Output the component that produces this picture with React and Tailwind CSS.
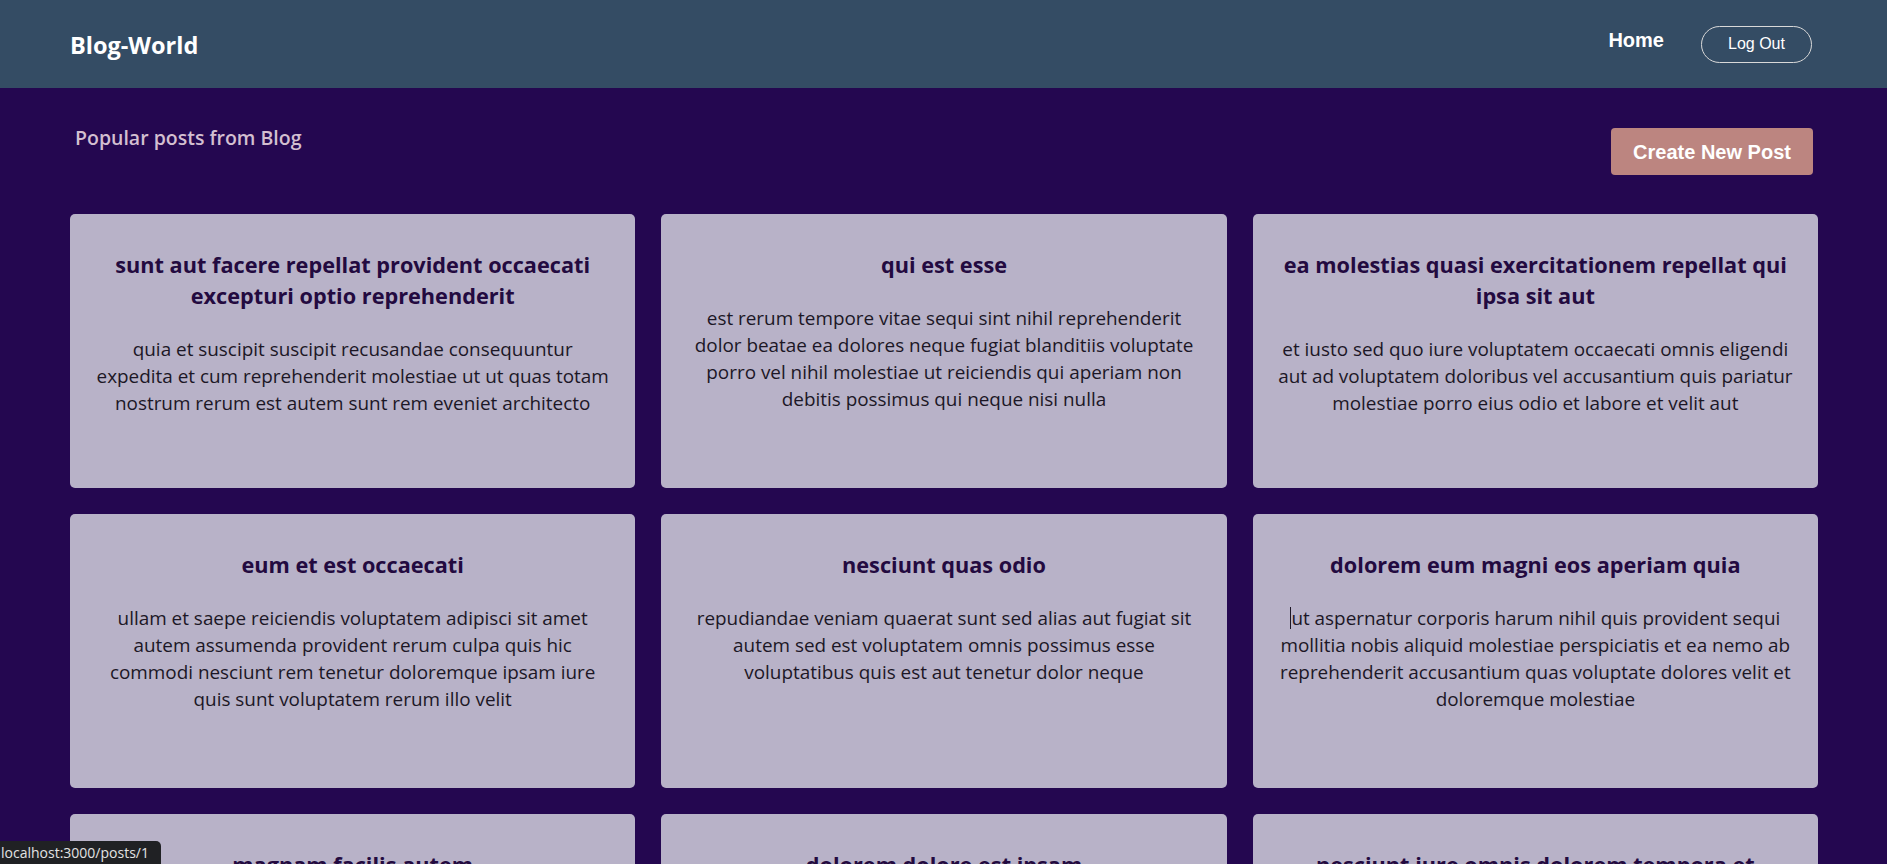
import React from "react";

const posts = [
  {
    title: "sunt aut facere repellat provident occaecati excepturi optio reprehenderit",
    body: "quia et suscipit suscipit recusandae consequuntur expedita et cum reprehenderit molestiae ut ut quas totam nostrum rerum est autem sunt rem eveniet architecto",
  },
  {
    title: "qui est esse",
    body: "est rerum tempore vitae sequi sint nihil reprehenderit dolor beatae ea dolores neque fugiat blanditiis voluptate porro vel nihil molestiae ut reiciendis qui aperiam non debitis possimus qui neque nisi nulla",
  },
  {
    title: "ea molestias quasi exercitationem repellat qui ipsa sit aut",
    body: "et iusto sed quo iure voluptatem occaecati omnis eligendi aut ad voluptatem doloribus vel accusantium quis pariatur molestiae porro eius odio et labore et velit aut",
  },
  {
    title: "eum et est occaecati",
    body: "ullam et saepe reiciendis voluptatem adipisci sit amet autem assumenda provident rerum culpa quis hic commodi nesciunt rem tenetur doloremque ipsam iure quis sunt voluptatem rerum illo velit",
  },
  {
    title: "nesciunt quas odio",
    body: "repudiandae veniam quaerat sunt sed alias aut fugiat sit autem sed est voluptatem omnis possimus esse voluptatibus quis est aut tenetur dolor neque",
  },
  {
    title: "dolorem eum magni eos aperiam quia",
    body: "ut aspernatur corporis harum nihil quis provident sequi mollitia nobis aliquid molestiae perspiciatis et ea nemo ab reprehenderit accusantium quas voluptate dolores velit et doloremque molestiae",
    caret: true,
  },
  {
    title: "magnam facilis autem",
    body: "dolore placeat quibusdam ea quo vitae magni quis enim qui quis quo nemo aut saepe quidem repellat excepturi ut quia sunt ut sequi eos ea sed quas",
  },
  {
    title: "dolorem dolore est ipsam",
    body: "dignissimos aperiam dolorem qui eum facilis quibusdam animi sint suscipit qui sint possimus cum quaerat magni maiores excepturi ipsam ut commodi dolor voluptatum modi aut vitae",
  },
  {
    title: "nesciunt iure omnis dolorem tempora et accusantium",
    body: "consectetur animi nesciunt iure dolore enim quia ad veniam autem ut quam aut nobis et est aut quod aut provident voluptas autem voluptas",
  },
];

export default function App() {
  return (
    <div className="relative h-screen overflow-hidden bg-[#240750] font-['Open_Sans',sans-serif]">
      <header className="h-[88px] bg-[#344c64] flex items-center justify-between pl-[70px] pr-[75px]">
        <div className="text-white font-bold text-[23.5px] leading-[30px] mt-[2px]">Blog-World</div>
        <nav className="flex items-center gap-[37px] font-['Liberation_Sans',Arial,sans-serif]">
          <a className="text-white font-bold text-[20px] leading-[23px] -mt-[7px]">Home</a>
          <button className="text-white text-[16px] leading-[18px] border border-[#d9d9d9] rounded-full h-[37px] w-[111px] flex items-center justify-center">
            Log Out
          </button>
        </nav>
      </header>
      <main className="pl-[70px] pr-[69px]">
        <div className="flex items-start justify-between pt-[40px]">
          <h2 className="ml-[5px] -mt-[3px] text-[19.5px] leading-[26px] font-semibold text-[#d3bfd0]">Popular posts from Blog</h2>
          <button className="mr-[5px] h-[47px] w-[202px] rounded-[4px] bg-[#bc8580] text-white font-bold text-[20px] font-['Liberation_Sans',Arial,sans-serif]">
            Create New Post
          </button>
        </div>
        <div className="mt-[39px] grid grid-cols-3 gap-[26px]">
          {posts.map((p, i) => (
            <div key={i} className="h-[274px] rounded-[5px] bg-[#b8b2c8] px-[24px] pt-[35px] text-center">
              <h3 className="text-[21.7px] leading-[31px] font-bold text-[#230a40]">{p.title}</h3>
              <p className="mt-[25px] text-[18.9px] leading-[27px] text-[#1c1726]">
                {p.caret && <span className="inline-block w-px h-[22px] bg-[#1c1726] align-[-4px]"></span>}
                {p.body}
              </p>
            </div>
          ))}
        </div>
      </main>
      <div className="absolute left-0 bottom-0 h-[23px] w-[161px] bg-[#202124] text-[#e3e3e3] text-[14px] leading-[23px] pl-[1px] rounded-tr-[5px] whitespace-nowrap">
        localhost:3000/posts/1
      </div>
    </div>
  );
}
